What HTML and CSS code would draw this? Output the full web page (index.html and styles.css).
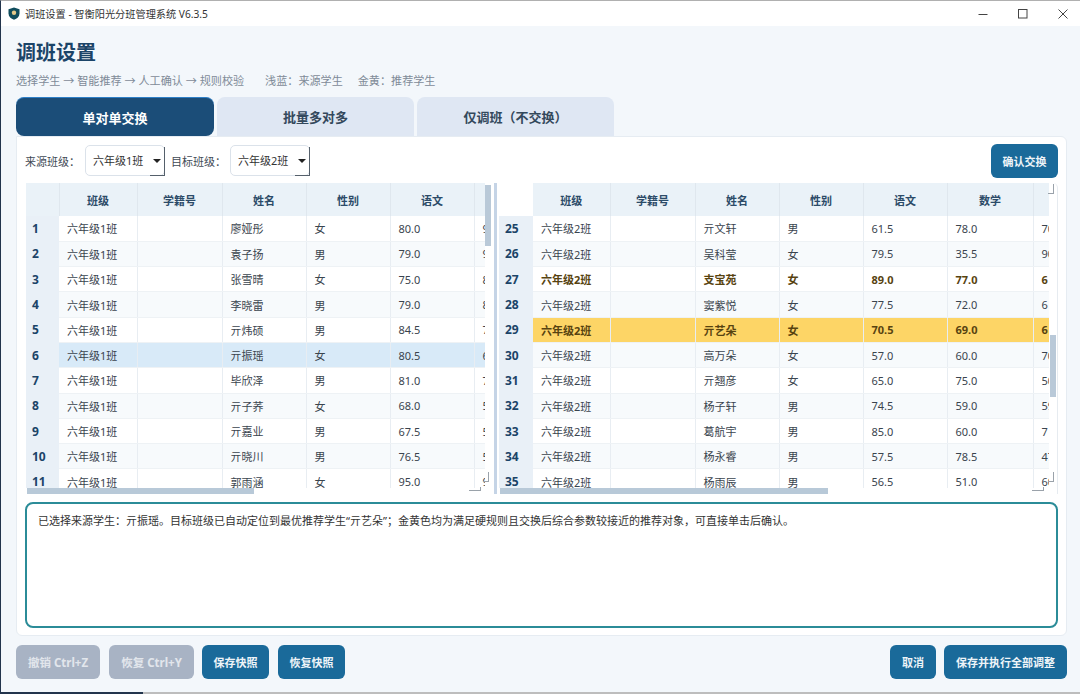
FILE: index.html
```html
<!DOCTYPE html>
<html lang="zh-CN">
<head>
  <meta charset="UTF-8">
  <title>调班设置 - 智衡阳光分班管理系统 V6.3.5</title>
  <link rel="stylesheet" href="styles.css">
</head>
<body>
  <div class="titlebar">
    <svg class="app-icon" width="12" height="13" viewBox="0 0 12 13"><path d="M6 0.5 L11.5 2.2 V6.5 C11.5 9.6 9 11.7 6 12.8 C3 11.7 0.5 9.6 0.5 6.5 V2.2 Z" fill="#0f4c5c"/><circle cx="6" cy="5.8" r="2.2" fill="#e4c98a"/></svg>
    <span class="window-title">调班设置 - 智衡阳光分班管理系统 V6.3.5</span>
    <div class="window-controls">
      <svg width="10" height="10" viewBox="0 0 10 10"><path d="M0.5 5.5 H9.5" stroke="#444" fill="none"/></svg>
      <svg width="10" height="10" viewBox="0 0 10 10"><rect x="0.5" y="0.5" width="8.5" height="8.5" stroke="#444" fill="none"/></svg>
      <svg width="10" height="10" viewBox="0 0 10 10"><path d="M0.5 0.5 L9.5 9.5 M9.5 0.5 L0.5 9.5" stroke="#444" fill="none"/></svg>
    </div>
  </div>

  <div class="content">
    <h1>调班设置</h1>
    <p class="subtitle">
      <span>选择学生 → 智能推荐 → 人工确认 → 规则校验</span>
      <span>浅蓝：来源学生</span>
      <span>金黄：推荐学生</span>
    </p>

    <div class="tabs">
      <div class="tab active">单对单交换</div>
      <div class="tab">批量多对多</div>
      <div class="tab">仅调班（不交换）</div>
    </div>

    <div class="panel">
      <div class="controls">
        <label>来源班级：</label>
        <div class="combo"><span>六年级1班</span><i class="arrow"></i></div>
        <label class="target-label">目标班级：</label>
        <div class="combo"><span>六年级2班</span><i class="arrow"></i></div>
        <button class="btn confirm-btn">确认交换</button>
      </div>

      <div class="tables">
        <div class="pane pane-left">
          <div class="grid-view">
            <table>
              <colgroup>
                <col class="c-no"><col class="c-class"><col class="c-id"><col class="c-mid"><col class="c-mid"><col class="c-mid"><col class="c-mid">
              </colgroup>
              <thead>
                <tr><th></th><th>班级</th><th>学籍号</th><th>姓名</th><th>性别</th><th>语文</th><th></th></tr>
              </thead>
              <tbody>
                <tr><th>1</th><td>六年级1班</td><td></td><td>廖娅彤</td><td>女</td><td>80.0</td><td>9</td></tr>
                <tr><th>2</th><td>六年级1班</td><td></td><td>袁子扬</td><td>男</td><td>79.0</td><td>9</td></tr>
                <tr><th>3</th><td>六年级1班</td><td></td><td>张雪晴</td><td>女</td><td>75.0</td><td>8</td></tr>
                <tr><th>4</th><td>六年级1班</td><td></td><td>李晓雷</td><td>男</td><td>79.0</td><td>8</td></tr>
                <tr><th>5</th><td>六年级1班</td><td></td><td>亓炜硕</td><td>男</td><td>84.5</td><td>7</td></tr>
                <tr class="current"><th>6</th><td>六年级1班</td><td></td><td>亓振瑶</td><td>女</td><td>80.5</td><td>6</td></tr>
                <tr><th>7</th><td>六年级1班</td><td></td><td>毕欣泽</td><td>男</td><td>81.0</td><td>7</td></tr>
                <tr><th>8</th><td>六年级1班</td><td></td><td>亓子荞</td><td>女</td><td>68.0</td><td>5</td></tr>
                <tr><th>9</th><td>六年级1班</td><td></td><td>亓嘉业</td><td>男</td><td>67.5</td><td>5</td></tr>
                <tr><th>10</th><td>六年级1班</td><td></td><td>亓晓川</td><td>男</td><td>76.5</td><td>5</td></tr>
                <tr><th>11</th><td>六年级1班</td><td></td><td>郭雨涵</td><td>女</td><td>95.0</td><td>9</td></tr>
              </tbody>
            </table>
          </div>
          <div class="vscroll vscroll-left"></div>
          <div class="hscroll hscroll-left"></div>
          <i class="grip grip-v grip-left-v"></i>
          <i class="grip grip-h grip-left-h"></i>
        </div>

        <div class="splitter"></div>

        <div class="pane pane-right">
          <div class="grid-view">
            <table>
              <colgroup>
                <col class="c-no-r"><col class="c-class-r"><col class="c-id"><col class="c-mid"><col class="c-mid"><col class="c-mid"><col class="c-math"><col class="c-mid">
              </colgroup>
              <thead>
                <tr><th class="corner"></th><th>班级</th><th>学籍号</th><th>姓名</th><th>性别</th><th>语文</th><th>数学</th><th></th></tr>
              </thead>
              <tbody>
                <tr><th>25</th><td>六年级2班</td><td></td><td>亓文轩</td><td>男</td><td>61.5</td><td>78.0</td><td>70</td></tr>
                <tr><th>26</th><td>六年级2班</td><td></td><td>吴科莹</td><td>女</td><td>79.5</td><td>35.5</td><td>90</td></tr>
                <tr class="candidate"><th>27</th><td>六年级2班</td><td></td><td>支宝苑</td><td>女</td><td>89.0</td><td>77.0</td><td>6</td></tr>
                <tr><th>28</th><td>六年级2班</td><td></td><td>窦紫悦</td><td>女</td><td>77.5</td><td>72.0</td><td>6</td></tr>
                <tr class="candidate best"><th>29</th><td>六年级2班</td><td></td><td>亓艺朵</td><td>女</td><td>70.5</td><td>69.0</td><td>6</td></tr>
                <tr><th>30</th><td>六年级2班</td><td></td><td>高万朵</td><td>女</td><td>57.0</td><td>60.0</td><td>70</td></tr>
                <tr><th>31</th><td>六年级2班</td><td></td><td>亓翘彦</td><td>女</td><td>65.0</td><td>75.0</td><td>50</td></tr>
                <tr><th>32</th><td>六年级2班</td><td></td><td>杨子轩</td><td>男</td><td>74.5</td><td>59.0</td><td>59</td></tr>
                <tr><th>33</th><td>六年级2班</td><td></td><td>葛航宇</td><td>男</td><td>85.0</td><td>60.0</td><td>7</td></tr>
                <tr><th>34</th><td>六年级2班</td><td></td><td>杨永睿</td><td>男</td><td>57.5</td><td>78.5</td><td>47</td></tr>
                <tr><th>35</th><td>六年级2班</td><td></td><td>杨雨辰</td><td>男</td><td>56.5</td><td>51.0</td><td>60</td></tr>
              </tbody>
            </table>
          </div>
          <div class="vscroll vscroll-right"></div>
          <div class="hscroll hscroll-right"></div>
          <i class="grip grip-v grip-right-top"></i>
          <i class="grip grip-v grip-right-v"></i>
          <i class="grip grip-h grip-right-h"></i>
        </div>
      </div>

      <div class="message">已选择来源学生：亓振瑶。目标班级已自动定位到最优推荐学生“亓艺朵”；金黄色均为满足硬规则且交换后综合参数较接近的推荐对象，可直接单击后确认。</div>
    </div>

    <div class="footer">
      <button class="btn disabled undo-btn">撤销 Ctrl+Z</button>
      <button class="btn disabled redo-btn">恢复 Ctrl+Y</button>
      <button class="btn snap-btn">保存快照</button>
      <button class="btn snap-btn">恢复快照</button>
      <button class="btn cancel-btn">取消</button>
      <button class="btn run-btn">保存并执行全部调整</button>
    </div>
  </div>

  <div class="desktop-edge"><span></span></div>
</body>
</html>
```

FILE: styles.css
```css
* {
  box-sizing: border-box;
}
html, body {
  height: 100%;
}
body {
  margin: 0;
  display: flex;
  flex-direction: column;
  overflow: hidden;
  font-family: "Noto Sans", "Noto Sans CJK SC", sans-serif;
  font-size: 11px;
  color: #3a444e;
  background-color: #f3f7fb;
  border-top: 1px solid #b0b0b0;
  border-left: 1px solid #22344c;
}

/* title bar */
.titlebar {
  height: 25px;
  flex: none;
  display: flex;
  align-items: center;
  padding-left: 7px;
  background-color: #fff;
}
.app-icon {
  margin-right: 5px;
}
.window-title {
  font-size: 10.2px;
  color: #333;
}
.window-controls {
  margin-left: auto;
  display: flex;
  gap: 30px;
  padding-right: 12px;
}

/* main area */
.content {
  flex: 1;
  min-height: 0;
  padding: 0 13px 0 15px;
  display: flex;
  flex-direction: column;
}
h1 {
  margin: 13px 0 0;
  height: 28px;
  line-height: 28px;
  font-size: 20px;
  font-weight: 700;
  color: #1b4468;
}
.subtitle {
  margin: 6px 0 0;
  height: 16px;
  line-height: 16px;
  font-size: 11.1px;
  color: #7f8b98;
  display: flex;
}
.subtitle span:nth-child(2) {
  margin-left: 21px;
}
.subtitle span:nth-child(3) {
  margin-left: 15px;
}

/* tabs */
.tabs {
  margin-top: 8px;
  display: flex;
  gap: 3px;
}
.tab {
  width: 197px;
  height: 39px;
  display: flex;
  align-items: center;
  justify-content: center;
  font-size: 13px;
  font-weight: 700;
  color: #34495c;
  background-color: #dfe7f3;
  border-radius: 8px 8px 0 0;
}
.tab.active {
  width: 198px;
  color: #fff;
  background-color: #1b4d78;
  border-top: 1px solid #2f80c8;
  border-radius: 8px;
}

/* panel */
.panel {
  height: 500px;
  padding: 7px 8px 8px;
  display: flex;
  flex-direction: column;
  background-color: #fff;
  border: 1px solid #e6ecf2;
  border-radius: 0 6px 6px 6px;
}
.controls {
  height: 33px;
  flex: none;
  display: flex;
  align-items: center;
  gap: 6px;
}
.controls label {
  width: 54px;
  white-space: nowrap;
  color: #3f4a55;
}
.controls .target-label {
  width: 53px;
}
.combo {
  width: 80px;
  height: 31px;
  margin-top: -1px;
  padding-left: 7px;
  display: flex;
  align-items: center;
  position: relative;
  border: 1px solid #dbe2ea;
  border-radius: 5px;
  background-color: #fff;
  color: #333;
}
.combo::after {
  content: "";
  position: absolute;
  right: -1px;
  bottom: -1px;
  width: 14px;
  height: 28px;
  border-right: 1px solid #55606b;
  border-bottom: 1px solid #55606b;
}
.arrow {
  position: absolute;
  right: 3px;
  top: 13px;
  border-left: 4px solid transparent;
  border-right: 4px solid transparent;
  border-top: 4px solid #222;
}
.btn {
  height: 34px;
  padding: 0;
  border: none;
  border-radius: 6px;
  font-family: inherit;
  font-size: 11px;
  font-weight: 700;
  color: #eef4f8;
  background-color: #1a6a9a;
}
.btn.disabled {
  font-size: 11.5px;
  color: #e2e6ec;
  background-color: #a8b3c4;
}
.confirm-btn {
  width: 67px;
  margin-left: auto;
}

/* tables */
.tables {
  height: 311px;
  flex: none;
  margin-top: 6px;
  display: flex;
}
.pane {
  position: relative;
  height: 100%;
}
.pane-left {
  width: 466px;
}
.pane-right {
  width: 559px;
  border-right: 1px solid #e6ebf0;
  border-radius: 0 5px 0 0;
}
.splitter {
  width: 3px;
  margin: 0 2px 0 3px;
  background-color: #c5d4e6;
}
.grid-view {
  height: 305px;
  overflow: hidden;
}
.pane-left .grid-view {
  width: 459px;
  margin-left: 1px;
}
.pane-right .grid-view {
  width: 550px;
}
table {
  table-layout: fixed;
  width: max-content;
  border-collapse: collapse;
}
.c-no { width: 33px; }
.c-class { width: 78px; }
.c-no-r { width: 34px; }
.c-class-r { width: 77px; }
.c-id { width: 85px; }
.c-mid { width: 84px; }
.c-math { width: 86px; }
thead tr {
  height: 33px;
}
thead th {
  padding: 0;
  font-size: 11px;
  font-weight: 700;
  color: #2c4b68;
  background-color: #eaf2f8;
  border-right: 1px solid #dfe7ee;
}
thead th.corner {
  background-color: #fff;
  border-right: none;
}
tbody tr {
  height: 25.3px;
  background-color: #fff;
}
tbody tr:nth-child(even) {
  background-color: #f7fafc;
}
tbody td {
  padding: 0 0 0 8px;
  white-space: nowrap;
  overflow: hidden;
  color: #3a444e;
  border-right: 1px solid #e8edf2;
  border-bottom: 1px solid #eef2f5;
}
tbody th {
  padding: 0 0 0 6px;
  text-align: left;
  font-size: 12px;
  font-weight: 700;
  color: #1b4468;
  background-color: #e9f0f7;
}
tbody tr.current {
  background-color: #d8eaf8;
}
tbody tr.candidate td {
  font-weight: 700;
  color: #574310;
}
tbody tr.best {
  background-color: #fdd566;
}

/* fake scroll bars drawn over the grids */
.vscroll {
  position: absolute;
  width: 6px;
  background-color: #b9c9d8;
}
.vscroll-left {
  left: 460px;
  top: 2px;
  height: 61px;
}
.vscroll-right {
  left: 551px;
  top: 152px;
  height: 62px;
}
.hscroll {
  position: absolute;
  top: 305px;
  height: 6px;
  background-color: #b8c9d8;
}
.hscroll-left {
  left: 2px;
  width: 227px;
}
.hscroll-right {
  left: 1px;
  width: 328px;
}
.grip {
  position: absolute;
  border-right: 1px solid #9aa2aa;
  border-bottom: 1px solid #9aa2aa;
}
.grip-v {
  width: 6px;
  height: 10px;
}
.grip-h {
  width: 12px;
  height: 4px;
}
.grip-left-v { left: 458px; top: 289px; }
.grip-left-h { left: 444px; top: 304px; }
.grip-right-top { left: 549px; top: 1px; }
.grip-right-v { left: 549px; top: 289px; }
.grip-right-h { left: 533px; top: 304px; }

/* message box */
.message {
  height: 126px;
  flex: none;
  margin-top: 8px;
  padding: 9px 11px;
  border: 2px solid #2b8c98;
  border-radius: 8px;
  line-height: 16px;
  color: #333;
}

/* bottom buttons */
.footer {
  margin-top: 9px;
  display: flex;
}
.undo-btn { width: 84px; margin-right: 9px; }
.redo-btn { width: 85px; margin-right: 8px; }
.snap-btn { width: 67px; margin-right: 9px; }
.cancel-btn { width: 46px; margin-left: auto; margin-right: 8px; }
.run-btn { width: 123px; }

.desktop-edge {
  height: 2px;
  flex: none;
  background-color: #bdbdbd;
}
.desktop-edge span {
  display: block;
  width: 142px;
  height: 2px;
  background-color: #22344c;
}
```
